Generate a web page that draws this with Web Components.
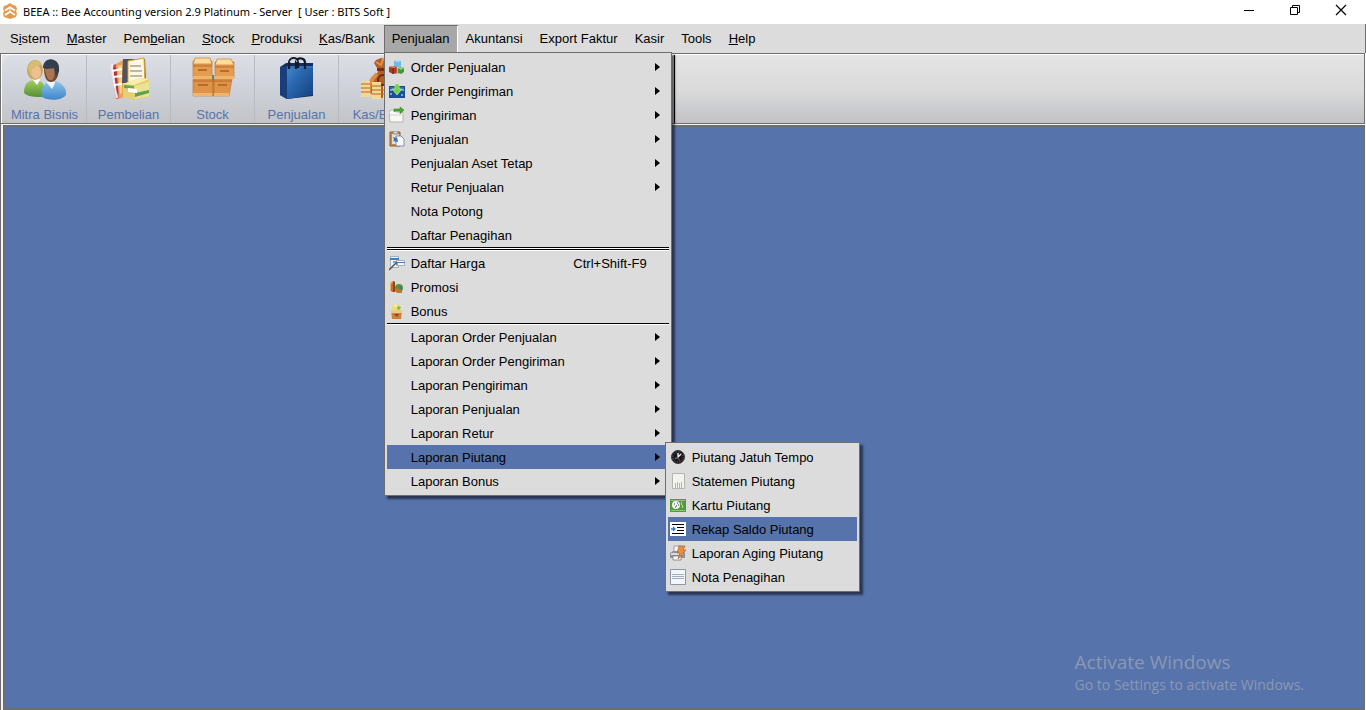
<!DOCTYPE html>
<html lang="id">
<head>
<meta charset="utf-8">
<title>BEEA :: Bee Accounting</title>
<style>
  :root { --blue: #5673ab; --face: #dcdcdc; --edge: #6e6e6e; }
  html, body { margin: 0; height: 100%; }
  body { font: 13px/16px "Liberation Sans", Arial, sans-serif; color: #000; background: #fff; overflow: hidden; }
</style>
</head>
<body>
<app-window>
  <title-bar slot="title">BEEA :: Bee Accounting version 2.9 Platinum - Server&nbsp; [ User : BITS Soft ]</title-bar>
  <menu-bar slot="menu">
    <menu-head>S<u>i</u>stem</menu-head>
    <menu-head><u>M</u>aster</menu-head>
    <menu-head>Pem<u>b</u>elian</menu-head>
    <menu-head><u>S</u>tock</menu-head>
    <menu-head><u>P</u>roduksi</menu-head>
    <menu-head><u>K</u>as/Bank</menu-head>
    <menu-head open>Penjualan
      <menu-popup slot="popup" class="main">
        <menu-entry icon="blocks" more>Order Penjualan</menu-entry>
        <menu-entry icon="inbox" more>Order Pengiriman</menu-entry>
        <menu-entry icon="send" more>Pengiriman</menu-entry>
        <menu-entry icon="paste" more>Penjualan</menu-entry>
        <menu-entry more>Penjualan Aset Tetap</menu-entry>
        <menu-entry more>Retur Penjualan</menu-entry>
        <menu-entry>Nota Potong</menu-entry>
        <menu-entry>Daftar Penagihan</menu-entry>
        <menu-rule double></menu-rule>
        <menu-entry icon="pricelist" keys="Ctrl+Shift-F9">Daftar Harga</menu-entry>
        <menu-entry icon="promo">Promosi</menu-entry>
        <menu-entry icon="bonus">Bonus</menu-entry>
        <menu-rule></menu-rule>
        <menu-entry more>Laporan Order Penjualan</menu-entry>
        <menu-entry more>Laporan Order Pengiriman</menu-entry>
        <menu-entry more>Laporan Pengiriman</menu-entry>
        <menu-entry more>Laporan Penjualan</menu-entry>
        <menu-entry more>Laporan Retur</menu-entry>
        <menu-entry more active>Laporan Piutang
          <menu-popup slot="popup" class="sub">
            <menu-entry icon="clock">Piutang Jatuh Tempo</menu-entry>
            <menu-entry icon="statement">Statemen Piutang</menu-entry>
            <menu-entry icon="card">Kartu Piutang</menu-entry>
            <menu-entry icon="recap" active>Rekap Saldo Piutang</menu-entry>
            <menu-entry icon="aging">Laporan Aging Piutang</menu-entry>
            <menu-entry icon="note">Nota Penagihan</menu-entry>
          </menu-popup>
        </menu-entry>
        <menu-entry more>Laporan Bonus</menu-entry>
      </menu-popup>
    </menu-head>
    <menu-head>Akuntansi</menu-head>
    <menu-head>Export Faktur</menu-head>
    <menu-head>Kasir</menu-head>
    <menu-head>Tools</menu-head>
    <menu-head><u>H</u>elp</menu-head>
  </menu-bar>
  <tool-bar slot="tools">
    <tool-button icon="people">Mitra Bisnis</tool-button>
    <tool-button icon="books">Pembelian</tool-button>
    <tool-button icon="boxes">Stock</tool-button>
    <tool-button icon="bag">Penjualan</tool-button>
    <tool-button icon="money">Kas/Bank</tool-button>
  </tool-bar>
  <desk-top>
    <system-notice heading="Activate Windows">Go to Settings to activate Windows.</system-notice>
  </desk-top>
</app-window>

<script>
const svg = (size, body) => `<svg viewBox="0 0 ${size} ${size}" width="${size}" height="${size}" aria-hidden="true">${body}</svg>`;

const ICONS = {
  logo: svg(16, `<path d="M8 0l3 2 3 1 1 3-1 2 1 3-1 3-3 1-3 1-3-1-3-1-1-3 1-3-1-2 1-3 3-1z" fill="#e39a4c"/><path d="M3 7.500l5-3.200 5 3.200M3 12l5-3.200 5 3.200" fill="none" stroke="#fff" stroke-width="1.700"/><path d="M8 5.500v3" stroke="#fff" stroke-width="1"/>`),
  blocks: svg(16, `<path d="M5 2l3-1 4 1v6H5z" fill="#74b9e8"/><path d="M5 2l3-1 4 1-3 1z" fill="#b9e2fa"/><path d="M0 8l3-1 5 1v6l-4 1-4-2z" fill="#a83a24"/><path d="M0 8l3-1 5 1-4 1z" fill="#dd8a70"/><path d="M4 9v6" stroke="#6f2015"/><path d="M9 9l3-1 3 1v4l-3 2-3-1z" fill="#3c9a3c"/><path d="M9 9l3-1 3 1-3 2z" fill="#8bd37c"/><path d="M8 9v6" stroke="#d67b55"/>`),
  inbox: svg(16, `<path d="M0 3h16v12H0z" fill="#1b4f94"/><path d="M1 4h14v4H1z" fill="#2d6db5"/><path d="M1 6h2v2H1zM1 10h2v2H1zM13 6h2v2h-2zM12 11h2v2h-2z" fill="#6ea8dc"/><path d="M6 1h4v5h3l-5 6-5-6h3z" fill="#6fd04c" stroke="#c9f0ae" stroke-width=".7"/>`),
  send: svg(16, `<path d="M0 5l2-2h4l1 2h7v10H1z" fill="#f8f8f4" stroke="#b5b5ad"/><path d="M1 8h12" stroke="#d6d6ce"/><path d="M5 5V2h6V0l4 3-4 4V4H6z" fill="#48a832" stroke="#2d7f22" stroke-width=".5"/>`),
  paste: svg(16, `<path d="M1 1h10v14H1z" fill="#c58a4a" stroke="#8a6038"/><path d="M3 3h7v10H3z" fill="#e6dfd2"/><path d="M4 0h5v3H4z" fill="#d0d0d0" stroke="#777" stroke-width=".7"/><path d="M7 5h5l3 3v7H7z" fill="#f5f7fa" stroke="#6f7d94" stroke-width=".8"/><path d="M4 6l3 1 1-1 1 5-5-1 1-1z" fill="#3874bd"/>`),
  pricelist: svg(16, `<path d="M1.500 1.500h8v11h-8z" fill="#edf2f7" stroke="#98a3b0" stroke-width=".8"/><path d="M1 3h9v2H1z" fill="#3c83c6"/><path d="M7.500 5.500h8v5h-8z" fill="#f7fafd" stroke="#98a3b0" stroke-width=".8"/><path d="M8 7h8v1H8z" fill="#3c83c6"/><path d="M0 15l7-7" stroke="#4d4d4d" stroke-width="1.300"/><path d="M4 7h4v3" fill="none" stroke="#4d4d4d"/>`),
  promo: svg(16, `<path d="M1 4l3-2 2 1v10H3l-2-2z" fill="#c1712d"/><path d="M4 2l2 1v10H4z" fill="#8b4718"/><path d="M1 4l3-2v1L2 5v6L1 11z" fill="#eab172"/><circle cx="10" cy="9" r="4" fill="#5a913d"/><path d="M6 9l3 1 4 2v2H8l-2-2z" fill="#c9762d"/><path d="M10 7l2 0 1 3-2 0z" fill="#3a75a4"/>`),
  bonus: svg(16, `<path d="M3 4l2-3h3l3 2 1 3-4 3-5-1z" fill="#e9dd75"/><path d="M5 2l2-1 1 2-2 1z" fill="#f8f4be"/><path d="M9 3l3 1-2 3-2-1z" fill="#82b94a"/><path d="M2 7h11l-1 9H3z" fill="#c98238"/><path d="M2 7h11v3H2z" fill="#f1c888"/><path d="M5 11h5l-2 3z" fill="#9c3f1e"/>`),
  clock: svg(16, `<circle cx="8" cy="8" r="6.500" fill="#16161a" stroke="#3a3a40"/><circle cx="8" cy="8" r="5" fill="none" stroke="#777784" stroke-dasharray="1 1.600"/><path d="M8 4v4l3-3" fill="none" stroke="#eee" stroke-width="1.400"/><path d="M8 8l-3 2" stroke="#4277c4" stroke-width="1.500"/><path d="M8 9l2 3" stroke="#8c2a24" stroke-width="1.500"/>`),
  statement: svg(16, `<path d="M2.500 .500h12v15h-12z" fill="#f3f3ee" stroke="#b6b6b0"/><path d="M5.500 10v5M7.500 9v6M9.500 10v5M11.500 9v6" stroke="#b5b5ae"/>`),
  card: svg(16, `<path d="M0 2h16v13H0z" fill="#4f9a3a"/><path d="M1 3h14v1H1zM1 13h14v1H1z" fill="#92c67c"/><circle cx="6" cy="8" r="4" fill="#f2f5ee"/><path d="M4 7h1M7 6h1M6 9h1M8 8h1M5 10h1" stroke="#333" stroke-width="1"/><path d="M12 5l-1 2 2 2-1 2" fill="none" stroke="#c6e5a9"/>`),
  recap: svg(16, `<path d="M0 1h16v14H0z" fill="#fff"/><path d="M2 3.500h12M7 6.500h7M7 9.500h7M2 12.500h12" stroke="#000" stroke-width="1.200"/><path d="M1 8h4M3 6l2 2-2 2" fill="none" stroke="#2d7ac9" stroke-width="1.300"/>`),
  aging: svg(16, `<path d="M4 1h7v7H4z" fill="#f8f8f8" stroke="#8c8c8c" stroke-width=".8"/><path d="M0 8l3-2h10l2 2v5H0z" fill="#8e9298"/><path d="M1 8h12v2H1z" fill="#dadde0"/><path d="M3 11h8v4H3z" fill="#fff" stroke="#777" stroke-width=".8"/><path d="M9 1h6l-2 4h3l-8 9 2-6H7z" fill="#e9903c" stroke="#b45e20" stroke-width=".7"/>`),
  note: svg(16, `<path d="M.500 .500h15v15H.500z" fill="#f4f6f9" stroke="#8b96a8"/><path d="M2 5.500h12M2 7.500h12M2 9.500h12" stroke="#a3adbf"/>`),
  people: svg(44, `<defs><linearGradient id="g" x2="0" y2="1"><stop stop-color="#a1d162"/><stop offset="1" stop-color="#568f34"/></linearGradient><linearGradient id="b" x2="0" y2="1"><stop stop-color="#8fc6ef"/><stop offset="1" stop-color="#3e86c8"/></linearGradient></defs><path d="M1 36c0-9 4-13 11-13 6 0 10 4 11 10l-3 7c-8 0-15 0-19-4z" fill="url(#g)"/><path d="M9 22l5 6 3-5-2-4h-5z" fill="#fff"/><ellipse cx="12" cy="13" rx="8" ry="10" fill="#c4a45c"/><ellipse cx="13" cy="15" rx="5" ry="7" fill="#edbf91"/><path d="M5 12c1-9 11-12 14-4l-6 1-4 4-1 7z" fill="#d6bd73"/><path d="M19 40c-2-10 4-16 11-16 8 0 14 7 13 14-5 6-18 6-24 2z" fill="url(#b)"/><path d="M24 26l5 6 3-6-2-4-5-1z" fill="#f3f7fb"/><path d="M21 11c0-11 15-11 15 0 0 8-3 14-8 14s-7-6-7-14z" fill="#714a34"/><path d="M22 12c1 8 3 12 7 11 3-2 3-8 2-12z" fill="#a97553"/><path d="M20 11c0-12 17-12 16 3l-3 5-2-8c-4 1-8 1-11 0z" fill="#333d4b"/>`),
  books: svg(44, `<path d="M4 9l5-2 4 34-4 1z" fill="#d04762"/><path d="M3 8l3-1 5 34H9z" fill="#f7e8e8"/><path d="M6 10l4 1 2 24-2 2z" fill="#a8304c"/><path d="M9 7l7-4 1 37-5 2z" fill="#e9a354"/><path d="M11 9l4-1v28l-2 1z" fill="#f8cf91"/><path d="M5 14l10-2M6 20l9-1M7 28l8-1" stroke="#fff" stroke-width="2"/><path d="M16 2h22l1 24H15z" fill="#51555b"/><path d="M21 4l16-3 1 25H21z" fill="#fff8e1" stroke="#d89f36"/><path d="M23 9h11M23 14h12M23 19h12" stroke="#aaa18f" stroke-width="1.500"/><path d="M16 27l17-6 9 1v18l-15 3-11-3z" fill="#e4cf72"/><path d="M16 27l17-6 9 1-15 6z" fill="#f7eeaa"/><path d="M28 29l14-4v14l-14 3z" fill="#eae395"/><path d="M28 36l14-3v3l-14 4z" fill="#63a151"/><path d="M17 28l10 1v3l-10-1z" fill="#67a74e"/><path d="M21 31l9 1v4l-9-1z" fill="#fff"/>`),
  boxes: svg(44, `<g stroke="#c97c36" stroke-width=".7"><path d="M2 22h21v17H2zM23 22h18l-3 17H23z" fill="#dd9348"/><path d="M2 4h19v17H2zM24 5h19v16H24z" fill="#e49d4f"/><path d="M4 1h15l2 6H2zM26 2h14l3 6H24z" fill="#fbdc9b"/></g><path d="M2 19h19v3H2zM24 19h19v3H24zM2 36h20v3H2zM23 36h15v3H23z" fill="#efb56c"/><path d="M7 12h9v2H7zM29 13h9v2h-9zM7 27h10v2H7zM27 27h9v2h-9z" fill="#b86c2b"/><path d="M2 9h19M24 10h19M2 24h39M22 22v17" stroke="#b96b2b"/><path d="M22 18v5" stroke="#628a4e" stroke-width="2"/>`),
  bag: svg(44, `<defs><linearGradient id="a" x2="1" y2="1"><stop stop-color="#4389cb"/><stop offset=".4" stop-color="#2866ae"/><stop offset="1" stop-color="#163f7d"/></linearGradient></defs><path d="M5 10l6-4h27v33l-26 3-7-4z" fill="#102e62"/><path d="M12 9h26v29l-26 4z" fill="url(#a)"/><path d="M5 10l7-1v33l-7-4z" fill="#193e7b"/><path d="M12 9h26v2H12z" fill="#3770af"/><path d="M14 12V6c0-6 9-7 9 0v5M21 12V5c0-5 9-5 9 1v6" fill="none" stroke="#151b2f" stroke-width="2.300"/><path d="M15 5c1-3 6-4 7 0" fill="none" stroke="#d7deea"/>`),
  money: svg(44, `<path d="M17 3l5-2 4 2 6-2-2 10c10 6 12 16 11 30H20c-13-3-12-16-1-26l-1-4-3-5z" fill="#b75e25"/><path d="M18 11h14v3H18z" fill="#752f17"/><path d="M17 5l5 3 2-6 5 4" fill="none" stroke="#db9350" stroke-width="2"/><path d="M18 17c-6 5-9 12-8 20" fill="none" stroke="#dc8d48" stroke-width="4"/><circle cx="24" cy="23" r="5" fill="none" stroke="#692d13" stroke-width="2"/><path d="M2 24h9v16H2zM13 25h9v17h-9zM24 29h10v13H24z" fill="#f2d994"/><path d="M2 27h9M2 31h9M2 35h9M13 29h9M13 33h9M13 37h9M24 33h10M24 37h10" stroke="#ca8b40" stroke-width="1.300"/>`)
};

class BaseElement extends HTMLElement {
  connectedCallback() {
    if (this.shadowRoot) return;
    this.attachShadow({ mode: 'open' }).innerHTML = this.render();
  }
  icon() { return ICONS[this.getAttribute('icon')] || ''; }
}

customElements.define('app-window', class extends BaseElement {
  render() {
    return `<style>
      :host { display: flex; flex-direction: column; height: 100vh; min-height: 600px; }
      ::slotted(desk-top) { flex: 1; }
      ::slotted(desk-top), ::slotted(tool-bar) { margin-right: 1px; }
    </style>
    <slot name="title"></slot><slot name="menu"></slot><slot name="tools"></slot><slot></slot>`;
  }
});

customElements.define('title-bar', class extends BaseElement {
  render() {
    return `<style>
      :host { display: flex; align-items: center; height: 24px; padding-left: 2px; background: #fff;
        font: 11px/16px "Noto Sans", sans-serif; box-sizing: border-box; flex: none; }
      svg { display: block; }
      .logo { flex: none; margin-bottom: 2px; }
      h1 { flex: 1; margin: 0 0 0 5px; font: inherit; white-space: pre; }
      .controls { display: flex; height: 100%; }
      button { width: 46px; padding: 0 0 4px 15px; border: 0; background: none; }
    </style>
    <span class="logo">${ICONS.logo}</span>
    <h1><slot></slot></h1>
    <div class="controls">
      <button aria-label="Minimize"><svg width="12" height="12"><path d="M1 6.500h10" stroke="#000"/></svg></button>
      <button aria-label="Restore"><svg width="12" height="12"><path d="M1.500 3.500h7v7h-7zM3.500 3.500v-2h7v7h-2" fill="none" stroke="#000"/></svg></button>
      <button aria-label="Close"><svg width="12" height="12"><path d="M1 1l10 10M11 1L1 11" stroke="#000" stroke-width="1.200"/></svg></button>
    </div>`;
  }
});

customElements.define('menu-bar', class extends BaseElement {
  render() {
    return `<style>
      :host { display: block; flex: none; background: var(--face); border-right: 1px solid var(--edge); }
      nav { display: flex; height: 29px; padding-left: 2px; box-sizing: border-box; }
    </style>
    <nav role="menubar"><slot></slot></nav>`;
  }
});

customElements.define('menu-head', class extends BaseElement {
  render() {
    return `<style>
      :host { display: flex; position: relative; padding-top: 1px; }
      button { font: inherit; color: inherit; border: 0; background: none; padding: 0 9px 0 8px; white-space: nowrap; }
      :host([open]) button { background: #a8a8a8; padding: 0 8px 1px 7px; border: 1px solid var(--edge); border-width: 1px 0 0 1px; box-shadow: inset -1px 0 #fff; }
      ::slotted(menu-popup) { position: absolute; z-index: 5; top: calc(100% - 1px); left: 0; width: 288px; }
    </style>
    <button role="menuitem"><slot></slot></button><slot name="popup"></slot>`;
  }
});

customElements.define('menu-popup', class extends BaseElement {
  render() {
    return `<style>
      :host { display: block; box-sizing: border-box; padding: 2px; background: var(--face);
        border: 1px solid var(--edge); box-shadow: 3px 3px 2px #0008; }
    </style>
    <div role="menu"><slot></slot></div>`;
  }
});

customElements.define('menu-entry', class extends BaseElement {
  render() {
    const keys = this.getAttribute('keys');
    return `<style>
      :host { display: block; position: relative; }
      button { display: flex; align-items: center; gap: 6px; width: 100%; height: 24px; padding: 0 9px 0 2px;
        border: 0; background: none; font: inherit; color: inherit; text-align: left; white-space: nowrap; }
      :host([active]) > button { background: var(--blue); }
      svg { display: block; }
      .icon { width: 16px; height: 16px; flex: none; }
      .label { flex: 1; }
      .label, .keys { padding-top: 2px; }
      .keys { margin-right: 2px; }
      .more { width: 5px; height: 8px; flex: none; }
      ::slotted(menu-popup) { position: absolute; z-index: 6; top: -3px; left: calc(100% - 4px); width: 195px; }
    </style>
    <button role="menuitem">
      <span class="icon">${this.icon()}</span>
      <span class="label"><slot></slot></span>
      ${keys ? `<span class="keys">${keys}</span>` : ''}
      <span class="more">${this.hasAttribute('more') ? '<svg width="5" height="8"><path d="M0 0l5 4-5 4z"/></svg>' : ''}</span>
    </button><slot name="popup"></slot>`;
  }
});

customElements.define('menu-rule', class extends BaseElement {
  render() {
    return `<style>
      :host { display: block; height: 1px; border-top: 1px solid #000; background: #fff; }
      :host([double]) { height: 1px; border-bottom: 1px solid #000; box-shadow: 0 1px #fff; margin-bottom: 1px; }
    </style>`;
  }
});

customElements.define('tool-bar', class extends BaseElement {
  render() {
    return `<style>
      :host { display: block; flex: none; border: 1px solid var(--edge); box-shadow: inset 1px 1px #fff; padding: 1px 0 0 1px;
        background: linear-gradient(#e5e5e5, #d9d9d9 55%, #cdced2 75%, #c2c2c2); background-origin: content-box; }
      .group { display: flex; width: 671px; height: 68px; padding-left: 1px; border-right: 1px solid #000; border-radius: 12px 0 0 12px;
        background: linear-gradient(#dcdee6, #d0d3db 45%, #c2c4c8); }
    </style>
    <div class="group" role="toolbar"><slot></slot></div>`;
  }
});

customElements.define('tool-button', class extends BaseElement {
  render() {
    return `<style>
      :host { display: flex; width: 84px; flex: none; }
      button { display: flex; flex-direction: column; align-items: center; gap: 5px; width: 100%; padding: 2px 0 0;
        border: 0; border-right: 1px solid #b9bbc2; background: none; font: inherit; line-height: 17px; color: var(--blue); white-space: nowrap; }
      svg { display: block; }
    </style>
    <button>${this.icon()}<span><slot></slot></span></button>`;
  }
});

customElements.define('desk-top', class extends BaseElement {
  render() {
    return `<style>
      :host { display: flex; min-height: 0; padding: 1px 0 0 2px; border-left: 1px solid var(--edge); background: #f4f4f4; }
      main { flex: 1; display: flex; justify-content: flex-end; align-items: flex-end; background: var(--blue);
        border: solid var(--edge); border-width: 2px 1px 2px 2px; padding: 0 60px 13px 0; }
    </style>
    <main><slot></slot></main>`;
  }
});

customElements.define('system-notice', class extends BaseElement {
  render() {
    return `<style>
      :host { display: block; font: 14px/20px "Open Sans", sans-serif; color: #8b98b3; }
      h2 { margin: 0 0 1px; font: inherit; font-size: 19px; line-height: 24px; }
      p { margin: 0; }
    </style>
    <h2>${this.getAttribute('heading')}</h2><p><slot></slot></p>`;
  }
});
</script>
</body>
</html>
